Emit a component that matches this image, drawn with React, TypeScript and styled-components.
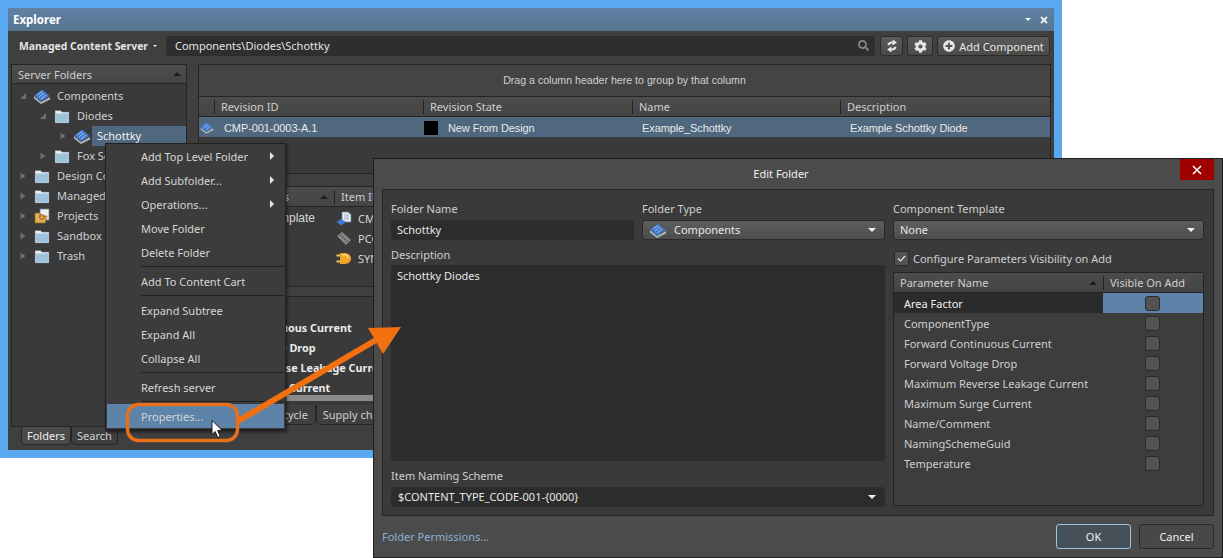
import styled, { createGlobalStyle } from "styled-components";
import { FaCog, FaPlusCircle, FaSearch } from "react-icons/fa";

const GlobalStyle = createGlobalStyle`
  html, body { margin: 0; padding: 0; background: #fff; }
  body { font-family: "Noto Sans", "Open Sans", sans-serif; font-size: 11px; letter-spacing: 0; color: #d8d8d8; }
  * { box-sizing: border-box; }
`;

const ComponentIcon = ({ size = 18 }: { size?: number }) => (
  <svg width={size} height={size} viewBox="0 0 18 18">
    <path d="M1 9 L8 15 L17 10 L17 12.5 L8 17 L1 11.5 Z" fill="#b0b8c0" />
    <path d="M1.5 8.5 L9 2.5 L16.5 9 L8 14.5 Z" fill="#4379cc" />
    <path d="M4 8 L9 4.5 M6 10 L11 6 M8 12 L13 8" stroke="#9cc0f0" strokeWidth="1" />
  </svg>
);

const FolderIcon = () => (
  <svg width={16} height={15} viewBox="0 0 16 15">
    <path d="M1 1.5 H6.5 L8 3 H15 V14 H1 Z" fill="#e8f0f6" stroke="#5c6a74" strokeWidth="0.6" />
    <rect x="1.6" y="4.5" width="12.8" height="9" fill="#9cc3da" />
  </svg>
);

const ProjectsIcon = () => (
  <svg width={17} height={17} viewBox="0 0 17 17">
    <rect x="6" y="1" width="9" height="11" fill="#eef0f2" stroke="#7b8288" strokeWidth="0.7" />
    <path d="M1 5 H6 V8 H13 L11 15 H1 Z" fill="#e0b050" stroke="#8a6a28" strokeWidth="0.7" />
    <circle cx="8" cy="9" r="2.4" fill="none" stroke="#b04a20" strokeWidth="1" />
  </svg>
);

const DocChipIcon = () => (
  <svg width={16} height={15} viewBox="0 0 16 15">
    <path d="M6 1 H12 L15 3.5 V11 H6 Z" fill="#e6ecf2" stroke="#6f8496" strokeWidth="0.7" />
    <path d="M8 4 H13 M8 6 H13 M8 8 H13" stroke="#8ea3b5" strokeWidth="0.8" />
    <path d="M0.5 11 L5 8 L10 11 L5 14.5 Z" fill="#3f78d0" />
  </svg>
);

const PadIcon = () => (
  <svg width={16} height={15} viewBox="0 0 16 15">
    <path d="M1 5 L6 1 L15 9 L10 14 Z" fill="#8a8a8a" />
    <path d="M4 5 L6 3.5 M6 7 L8 5.5 M8 9 L10 7.5 M10 11 L12 9.5" stroke="#555" strokeWidth="1.2" />
  </svg>
);

const PlugIcon = () => (
  <svg width={16} height={15} viewBox="0 0 16 15">
    <path d="M4 2 H9 C13 2 15 5 15 7.5 C15 10 13 13 9 13 H4 Z" fill="#f0a428" />
    <path d="M0.5 4.5 H4 M0.5 10.5 H4" stroke="#f6c868" strokeWidth="2" />
    <path d="M6 4 H9 C11 4 12 5.5 12 7" stroke="#ffe2a0" strokeWidth="1.2" fill="none" />
  </svg>
);

const SyncIcon = () => (
  <svg width={14} height={14} viewBox="0 0 14 14" fill="#e4e4e4">
    <path d="M2.5 6.2 C2.5 3.6 5 2.3 7.6 2.6 V0.6 L12 3.6 L7.6 6.4 V4.6 C6 4.4 5 5.2 4.8 6.2 Z" />
    <path d="M11.5 7.8 C11.5 10.4 9 11.7 6.4 11.4 V13.4 L2 10.4 L6.4 7.6 V9.4 C8 9.6 9 8.8 9.2 7.8 Z" />
  </svg>
);

const DropArrow = styled.span<{ $size?: number }>`
  width: 0;
  height: 0;
  border-left: ${(p) => p.$size ?? 5}px solid transparent;
  border-right: ${(p) => p.$size ?? 5}px solid transparent;
  border-top: ${(p) => p.$size ?? 5}px solid #f0f0f0;
`;

const SortArrow = styled.span`
  width: 0;
  height: 0;
  border-left: 4px solid transparent;
  border-right: 4px solid transparent;
  border-bottom: 4px solid #1e1e1e;
`;

const Canvas = styled.div`
  position: relative;
  width: 1223px;
  height: 558px;
  overflow: hidden;
  background: #fff;
`;

const ExplorerWindow = styled.div`
  position: absolute;
  left: 0;
  top: 0;
  width: 1062px;
  height: 458px;
  border: 8px solid #5aa8ef;
  background: #3f3f3f;
  display: flex;
  flex-direction: column;
`;

const TitleBar = styled.div`
  height: 23px;
  flex: none;
  display: flex;
  align-items: center;
  padding: 0 6px 0 5px;
  background: linear-gradient(#5f81a3, #567590);
  color: #fff;
  font-weight: 700;
  font-size: 11.5px;
`;

const TitleText = styled.span`
  flex: 1;
`;

const TitleButtons = styled.div`
  display: flex;
  align-items: center;
  gap: 9px;
`;

const Toolbar = styled.div`
  height: 33px;
  flex: none;
  display: flex;
  align-items: center;
  padding: 0 4px 3px 11px;
`;

const ServerPicker = styled.div`
  width: 147px;
  flex: none;
  display: flex;
  align-items: center;
  gap: 5px;
  color: #e4e4e4;
  font-weight: 700;
  font-size: 10.4px;
`;

const SearchBox = styled.div`
  width: 709px;
  height: 20px;
  flex: none;
  display: flex;
  align-items: center;
  justify-content: space-between;
  padding: 0 6px 2px 9px;
  border-radius: 3px;
  background: #2e2e2e;
  color: #e4e4e4;
`;

const ToolButton = styled.div<{ $width: number; $gap: number }>`
  width: ${(p) => p.$width}px;
  height: 20px;
  flex: none;
  margin-left: ${(p) => p.$gap}px;
  display: flex;
  align-items: center;
  justify-content: center;
  gap: 4px;
  border: 1px solid #2a2a2a;
  border-radius: 3px;
  background: linear-gradient(#5a5a5a, #4a4a4a);
  color: #e6e6e6;
  font-size: 11px;
`;

const Body = styled.div`
  flex: 1;
  display: flex;
  min-height: 0;
  padding-left: 3px;
`;

const LeftColumn = styled.div`
  width: 176px;
  flex: none;
  display: flex;
  flex-direction: column;
`;

const FoldersPanel = styled.div`
  height: 363px;
  flex: none;
  border: 1px solid #262626;
  background: #3a3a3a;
`;

const PanelHeader = styled.div`
  height: 19px;
  display: flex;
  align-items: center;
  justify-content: space-between;
  padding: 0 5px 0 6px;
  background: linear-gradient(#4e4e4e, #454545);
  border-bottom: 1px solid #262626;
  color: #cfcfcf;
`;

const TreeList = styled.div`
  padding-top: 2px;
`;

const TreeRow = styled.div<{ $level: number }>`
  height: 20px;
  display: flex;
  align-items: center;
  padding-left: ${(p) => 7 + p.$level * 20}px;
`;

const TreeArrow = styled.span`
  width: 14px;
  flex: none;
  display: flex;
`;

const TreeIconBox = styled.span`
  width: 18px;
  height: 18px;
  flex: none;
  display: flex;
  align-items: center;
  justify-content: center;
`;

const TreeLabel = styled.span<{ $selected?: boolean }>`
  flex: 1;
  margin-left: 1px;
  padding-left: 5px;
  line-height: 20px;
  color: ${(p) => (p.$selected ? "#f0f0f0" : "#cfcfcf")};
  background: ${(p) => (p.$selected ? "#50687f" : "transparent")};
`;

const TabStrip = styled.div<{ $indent: number }>`
  display: flex;
  padding-left: ${(p) => p.$indent}px;
`;

const Tab = styled.div<{ $active?: boolean; $width: number; $height?: number }>`
  width: ${(p) => p.$width}px;
  height: ${(p) => p.$height ?? 18}px;
  display: flex;
  align-items: center;
  justify-content: center;
  background: ${(p) => (p.$active ? "#4a4a4a" : "#3f3f3f")};
  border: 1px solid #262626;
  border-top: none;
  border-radius: 0 0 5px 5px;
  color: ${(p) => (p.$active ? "#eee" : "#cfcfcf")};
  white-space: nowrap;
`;

const RightColumn = styled.div`
  width: 853px;
  flex: none;
  margin-left: 11px;
  display: flex;
  flex-direction: column;
`;

const RevisionPane = styled.div`
  height: 110px;
  flex: none;
  border: 1px solid #262626;
  border-bottom-color: #222;
  background: #3a3a3a;
`;

const GroupBand = styled.div`
  height: 32px;
  display: flex;
  align-items: center;
  justify-content: center;
  padding-bottom: 2px;
  background: #444;
  border-bottom: 1px solid #262626;
  color: #d0d0d0;
  font-family: "Liberation Sans", Arial, sans-serif;
  font-size: 10.6px;
`;

const revisionColumns = "15px 209px 209px 208px 1fr";

const GridHeader = styled.div<{ $columns: string }>`
  height: 20px;
  display: grid;
  grid-template-columns: ${(p) => p.$columns};
  align-items: center;
  background: linear-gradient(#4c4c4c, #444);
  border-bottom: 1px solid #262626;
  color: #cfcfcf;
`;

const HeaderCell = styled.div`
  height: 14px;
  line-height: 14px;
  padding-left: 6px;
  border-left: 1px solid #222;
  white-space: nowrap;
`;

const HeaderBlank = styled.div``;

const RevisionRow = styled.div`
  height: 20px;
  display: grid;
  grid-template-columns: ${revisionColumns};
  align-items: center;
  padding-top: 1px;
  background: #50687f;
  color: #e8e8e8;
  font-family: "Liberation Sans", Arial, sans-serif;
  font-size: 11px;
  letter-spacing: -0.1px;
`;

const RowIcon = styled.div`
  display: flex;
  margin-left: 1px;
`;

const RowCell = styled.div`
  padding-left: 10px;
  white-space: nowrap;
`;

const StateCell = styled.div`
  display: flex;
  align-items: center;
  gap: 10px;
  padding-left: 1px;
`;

const Swatch = styled.span`
  width: 14px;
  height: 14px;
  background: #000;
`;

const LowerPane = styled.div`
  margin-top: 12px;
  height: 219px;
  flex: none;
  border-top: 1px solid #262626;
  display: flex;
  flex-direction: column;
  background: #3a3a3a;
`;

const lowerColumns = "136px 1fr";

const ItemRow = styled.div`
  height: 20px;
  display: grid;
  grid-template-columns: ${lowerColumns};
  align-items: center;
  color: #d8d8d8;
`;

const StatusCell = styled.div`
  text-align: right;
  padding-right: 19px;
  font-family: "Liberation Sans", Arial, sans-serif;
  font-size: 12px;
  white-space: nowrap;
`;

const TypesHeader = styled.div`
  display: flex;
  align-items: center;
  justify-content: flex-end;
  gap: 31px;
  padding-right: 6px;
`;

const ItemCell = styled.div`
  display: flex;
  align-items: center;
  gap: 6px;
  padding-left: 2px;
`;

const ItemList = styled.div`
  padding-top: 1px;
  height: 80px;
  border-bottom: 1px solid #262626;
`;

const ParamsHeaderGap = styled.div`
  height: 10px;
  background: #3f3f3f;
  border-bottom: 1px solid #262626;
`;

const ParamsList = styled.div`
  flex: 1;
  padding: 21px 0 0 0;
  color: #ececec;
  font-weight: 700;
  font-size: 10.8px;
  overflow: hidden;
`;

const ParamLine = styled.div`
  height: 20px;
  line-height: 20px;
  white-space: nowrap;
`;

const ScrollTrack = styled.div`
  height: 6px;
  flex: none;
  background: #8a8a8a;
  margin-bottom: 4px;
`;

const ContextMenu = styled.div`
  position: absolute;
  left: 105px;
  top: 143px;
  width: 181px;
  height: 287px;
  padding: 0 1px;
  background: #3c3c3c;
  border: 1px solid #222;
  box-shadow: 1px 2px 3px rgba(0, 0, 0, 0.55);
  z-index: 2;
`;

const MenuRow = styled.div<{ $hot?: boolean }>`
  height: 24px;
  display: flex;
  align-items: center;
  justify-content: space-between;
  padding: 0 10px 0 34px;
  background: ${(p) => (p.$hot ? "#5d83a8" : "transparent")};
  color: #d6d6d6;
`;

const MenuSeparator = styled.div`
  height: 5px;
  margin-left: 34px;
  padding-top: 2px;
  &::after {
    content: "";
    display: block;
    height: 1px;
    background: #1f1f1f;
  }
`;

const SubArrow = styled.span`
  width: 0;
  height: 0;
  border-top: 4px solid transparent;
  border-bottom: 4px solid transparent;
  border-left: 4px solid #e6e6e6;
`;

const Dialog = styled.div`
  position: absolute;
  left: 373px;
  top: 158px;
  width: 850px;
  height: 400px;
  border: 1px solid #1d1d1d;
  background: #4b4b4b;
  display: flex;
  flex-direction: column;
  z-index: 3;
`;

const DialogTitle = styled.div`
  height: 30px;
  flex: none;
  position: relative;
  display: flex;
  align-items: center;
  justify-content: center;
  color: #f0f0f0;
  padding: 0 34px 1px 0;
`;

const CloseButton = styled.div`
  position: absolute;
  right: 8px;
  top: 0;
  width: 34px;
  height: 21px;
  display: flex;
  align-items: center;
  justify-content: center;
  background: #a00000;
`;

const DialogPanel = styled.div`
  height: 327px;
  flex: none;
  margin: 0 8px;
  padding: 12px 8px 0;
  border: 1px solid #242424;
  background: #3a3a3a;
  display: flex;
  gap: 8px;
`;

const FormColumn = styled.div<{ $width: number }>`
  width: ${(p) => p.$width}px;
  flex: none;
  display: flex;
  flex-direction: column;
`;

const FieldRow = styled.div`
  display: flex;
  gap: 8px;
`;

const Field = styled.div`
  width: 243px;
  flex: none;
`;

const FieldLabel = styled.div<{ $top?: number; $bottom?: number }>`
  height: 14px;
  line-height: 14px;
  margin-top: ${(p) => p.$top ?? 0}px;
  margin-bottom: ${(p) => p.$bottom ?? 4}px;
  color: #cfcfcf;
`;

const TextInput = styled.div`
  height: 20px;
  display: flex;
  align-items: center;
  padding: 0 0 1px 6px;
  border-radius: 3px;
  background: #2c2c2c;
  color: #e6e6e6;
`;

const TextArea = styled.div`
  height: 196px;
  padding: 3px 6px;
  border-radius: 3px;
  background: #2c2c2c;
  color: #e6e6e6;
`;

const Select = styled.div<{ $flat?: boolean }>`
  height: 20px;
  display: flex;
  align-items: center;
  gap: 7px;
  padding: 0 8px 1px 6px;
  border-radius: 3px;
  border: 1px solid ${(p) => (p.$flat ? "#2c2c2c" : "#2a2a2a")};
  background: ${(p) => (p.$flat ? "#2c2c2c" : "linear-gradient(#5e5e5e, #4c4c4c)")};
  color: #e6e6e6;
`;

const SelectValue = styled.span`
  flex: 1;
`;

const CheckRow = styled.div`
  display: flex;
  align-items: center;
  gap: 4px;
  margin: 11px 0 6px 1px;
  height: 15px;
  color: #cfcfcf;
`;

const CheckBox = styled.span`
  width: 15px;
  height: 15px;
  flex: none;
  display: flex;
  align-items: center;
  justify-content: center;
  border: 1px solid #2a2a2a;
  border-radius: 3px;
  background: #535353;
`;

const ParamTable = styled.div`
  height: 234px;
  border: 1px solid #242424;
  border-radius: 2px;
  background: #3d3d3d;
`;

const paramColumns = "209px 1fr";

const ParamHeader = styled.div`
  height: 20px;
  display: grid;
  grid-template-columns: ${paramColumns};
  align-items: center;
  background: linear-gradient(#4c4c4c, #444);
  border-bottom: 1px solid #262626;
  color: #cfcfcf;
`;

const ParamHeaderName = styled.div`
  display: flex;
  align-items: center;
  justify-content: space-between;
  padding: 0 6px;
`;

const ParamRow = styled.div`
  height: 20px;
  display: grid;
  grid-template-columns: ${paramColumns};
`;

const ParamName = styled.div<{ $selected?: boolean }>`
  display: flex;
  align-items: center;
  padding-left: 10px;
  background: ${(p) => (p.$selected ? "#2b2b2b" : "transparent")};
  color: ${(p) => (p.$selected ? "#f0f0f0" : "#cfcfcf")};
`;

const ParamVisible = styled.div<{ $selected?: boolean }>`
  display: flex;
  align-items: center;
  justify-content: center;
  padding-right: 2px;
  background: ${(p) => (p.$selected ? "#5d83a8" : "transparent")};
`;

const DialogFooter = styled.div`
  flex: 1;
  display: flex;
  align-items: center;
  padding: 0 8px;
  gap: 8px;
`;

const PermissionsLink = styled.span`
  flex: 1;
  color: #8db0d2;
`;

const DialogButton = styled.div<{ $primary?: boolean }>`
  width: 75px;
  height: 25px;
  display: flex;
  align-items: center;
  justify-content: center;
  border: 1px solid ${(p) => (p.$primary ? "#9fc4e2" : "#2a2a2a")};
  border-radius: 3px;
  background: ${(p) => (p.$primary ? "#465058" : "#484848")};
  color: #f0f0f0;
`;

const Overlay = styled.svg`
  position: absolute;
  left: 0;
  top: 0;
  z-index: 4;
  pointer-events: none;
`;

type TreeItem = {
  label: string;
  level: number;
  icon: "component" | "folder" | "projects";
  open?: boolean;
  selected?: boolean;
};

const treeItems: TreeItem[] = [
  { label: "Components", level: 0, icon: "component", open: true },
  { label: "Diodes", level: 1, icon: "folder", open: true },
  { label: "Schottky", level: 2, icon: "component", selected: true },
  { label: "Fox Semi", level: 1, icon: "folder" },
  { label: "Design Content", level: 0, icon: "folder" },
  { label: "Managed", level: 0, icon: "folder" },
  { label: "Projects", level: 0, icon: "projects" },
  { label: "Sandbox", level: 0, icon: "folder" },
  { label: "Trash", level: 0, icon: "folder" },
];

const treeIcons = {
  component: <ComponentIcon />,
  folder: <FolderIcon />,
  projects: <ProjectsIcon />,
};

const TreeToggle = ({ open }: { open?: boolean }) => (
  <svg width={8} height={8} viewBox="0 0 8 8">
    {open ? <path d="M7 1 V7 H1 Z" fill="#6f6f6f" /> : <path d="M1.5 0.5 L6.5 4 L1.5 7.5 Z" fill="#6f6f6f" />}
  </svg>
);

type MenuEntry = { label?: string; sub?: boolean; hot?: boolean };

const menuEntries: MenuEntry[] = [
  { label: "Add Top Level Folder", sub: true },
  { label: "Add Subfolder...", sub: true },
  { label: "Operations...", sub: true },
  { label: "Move Folder" },
  { label: "Delete Folder" },
  {},
  { label: "Add To Content Cart" },
  {},
  { label: "Expand Subtree" },
  { label: "Expand All" },
  { label: "Collapse All" },
  {},
  { label: "Refresh server" },
  {},
  { label: "Properties...", hot: true },
];

const parameters = [
  "Area Factor",
  "ComponentType",
  "Forward Continuous Current",
  "Forward Voltage Drop",
  "Maximum Reverse Leakage Current",
  "Maximum Surge Current",
  "Name/Comment",
  "NamingSchemeGuid",
  "Temperature",
];

const items = [
  { status: "Component Template", code: "CMP", icon: <DocChipIcon /> },
  { status: "", code: "PCC", icon: <PadIcon /> },
  { status: "", code: "SYM", icon: <PlugIcon /> },
];

const Explorer = () => (
  <ExplorerWindow>
    <TitleBar>
      <TitleText>Explorer</TitleText>
      <TitleButtons>
        <DropArrow $size={3} />
        <svg width={8} height={8} viewBox="0 0 8 8">
          <path d="M1 1 L7 7 M7 1 L1 7" stroke="#f0f0f0" strokeWidth="1.8" />
        </svg>
      </TitleButtons>
    </TitleBar>
    <Toolbar>
      <ServerPicker>
        Managed Content Server
        <DropArrow $size={2} />
      </ServerPicker>
      <SearchBox>
        Components\Diodes\Schottky
        <FaSearch size={11} color="#8a8a8a" />
      </SearchBox>
      <ToolButton $width={23} $gap={5}>
        <SyncIcon />
      </ToolButton>
      <ToolButton $width={26} $gap={4}>
        <FaCog size={13} />
      </ToolButton>
      <ToolButton $width={113} $gap={4}>
        <FaPlusCircle size={12} />
        Add Component
      </ToolButton>
    </Toolbar>
    <Body>
      <LeftColumn>
        <FoldersPanel>
          <PanelHeader>
            Server Folders
            <SortArrow />
          </PanelHeader>
          <TreeList>
            {treeItems.map((t) => (
              <TreeRow key={t.label} $level={t.level}>
                <TreeArrow>
                  <TreeToggle open={t.open} />
                </TreeArrow>
                <TreeIconBox>{treeIcons[t.icon]}</TreeIconBox>
                <TreeLabel $selected={t.selected}>{t.label}</TreeLabel>
              </TreeRow>
            ))}
          </TreeList>
        </FoldersPanel>
        <TabStrip $indent={10}>
          <Tab $active $width={50}>Folders</Tab>
          <Tab $width={47}>Search</Tab>
        </TabStrip>
      </LeftColumn>
      <RightColumn>
        <RevisionPane>
          <GroupBand>Drag a column header here to group by that column</GroupBand>
          <GridHeader $columns={revisionColumns}>
            <HeaderBlank />
            <HeaderCell>Revision ID</HeaderCell>
            <HeaderCell>Revision State</HeaderCell>
            <HeaderCell>Name</HeaderCell>
            <HeaderCell>Description</HeaderCell>
          </GridHeader>
          <RevisionRow>
            <RowIcon>
              <ComponentIcon size={15} />
            </RowIcon>
            <RowCell>CMP-001-0003-A.1</RowCell>
            <StateCell>
              <Swatch />
              New From Design
            </StateCell>
            <RowCell>Example_Schottky</RowCell>
            <RowCell>Example Schottky Diode</RowCell>
          </RevisionRow>
        </RevisionPane>
        <LowerPane>
          <GridHeader $columns={lowerColumns}>
            <TypesHeader>
              Types
              <SortArrow />
            </TypesHeader>
            <HeaderCell>Item ID</HeaderCell>
          </GridHeader>
          <ItemList>
            {items.map((it) => (
              <ItemRow key={it.code}>
                <StatusCell>{it.status}</StatusCell>
                <ItemCell>
                  {it.icon}
                  {it.code}
                </ItemCell>
              </ItemRow>
            ))}
          </ItemList>
          <ParamsHeaderGap />
          <ParamsList>
            <ParamLine>Forward Continuous Current</ParamLine>
            <ParamLine>Forward Voltage Drop</ParamLine>
            <ParamLine>Maximum Reverse Leakage Current</ParamLine>
            <ParamLine>Maximum Surge Current</ParamLine>
          </ParamsList>
          <ScrollTrack />
        </LowerPane>
        <TabStrip $indent={58}>
          <Tab $width={60} $height={20}>Lifecycle</Tab>
          <Tab $width={79} $height={20}>Supply chain</Tab>
        </TabStrip>
      </RightColumn>
    </Body>
  </ExplorerWindow>
);

const FolderMenu = () => (
  <ContextMenu>
    {menuEntries.map((m, i) =>
      m.label ? (
        <MenuRow key={m.label} $hot={m.hot}>
          {m.label}
          {m.sub && <SubArrow />}
        </MenuRow>
      ) : (
        <MenuSeparator key={i} />
      )
    )}
  </ContextMenu>
);

const EditFolder = () => (
  <Dialog>
    <DialogTitle>
      Edit Folder
      <CloseButton>
        <svg width={10} height={10} viewBox="0 0 10 10">
          <path d="M1 1 L9 9 M9 1 L1 9" stroke="#fff" strokeWidth="1.6" />
        </svg>
      </CloseButton>
    </DialogTitle>
    <DialogPanel>
      <FormColumn $width={494}>
        <FieldRow>
          <Field>
            <FieldLabel>Folder Name</FieldLabel>
            <TextInput>Schottky</TextInput>
          </Field>
          <Field>
            <FieldLabel>Folder Type</FieldLabel>
            <Select>
              <ComponentIcon />
              <SelectValue>Components</SelectValue>
              <DropArrow $size={4} />
            </Select>
          </Field>
        </FieldRow>
        <FieldLabel $top={8} $bottom={3}>Description</FieldLabel>
        <TextArea>Schottky Diodes</TextArea>
        <FieldLabel $top={8}>Item Naming Scheme</FieldLabel>
        <Select $flat>
          <SelectValue>$CONTENT_TYPE_CODE-001-{"{0000}"}</SelectValue>
          <DropArrow $size={4} />
        </Select>
      </FormColumn>
      <FormColumn $width={311}>
        <FieldLabel>Component Template</FieldLabel>
        <Select>
          <SelectValue>None</SelectValue>
          <DropArrow $size={4} />
        </Select>
        <CheckRow>
          <CheckBox>
            <svg width={9} height={9} viewBox="0 0 9 9">
              <path d="M1 4.5 L3.5 7 L8 2" stroke="#e6e6e6" strokeWidth="1.2" fill="none" />
            </svg>
          </CheckBox>
          Configure Parameters Visibility on Add
        </CheckRow>
        <ParamTable>
          <ParamHeader>
            <ParamHeaderName>
              Parameter Name
              <SortArrow />
            </ParamHeaderName>
            <HeaderCell>Visible On Add</HeaderCell>
          </ParamHeader>
          {parameters.map((name, i) => (
            <ParamRow key={name}>
              <ParamName $selected={i === 0}>{name}</ParamName>
              <ParamVisible $selected={i === 0}>
                <CheckBox />
              </ParamVisible>
            </ParamRow>
          ))}
        </ParamTable>
      </FormColumn>
    </DialogPanel>
    <DialogFooter>
      <PermissionsLink>Folder Permissions...</PermissionsLink>
      <DialogButton $primary>OK</DialogButton>
      <DialogButton>Cancel</DialogButton>
    </DialogFooter>
  </Dialog>
);

const Callout = () => (
  <Overlay width={1223} height={558} viewBox="0 0 1223 558">
    <rect x="127.5" y="404.5" width="110" height="36" rx="11" fill="none" stroke="#e8701a" strokeWidth="3.5" />
    <path d="M238 421 L376 340" stroke="#f2700f" strokeWidth="6" />
    <path d="M368 328 L401 327 L383 354 Z" fill="#f2700f" />
    <path d="M212 420.5 V434.5 L215.2 431.5 L217.8 437.5 L220.2 436.4 L217.6 430.5 L222 430.2 Z" fill="#fff" stroke="#111" strokeWidth="0.9" />
  </Overlay>
);

export default function App() {
  return (
    <>
      <GlobalStyle />
      <Canvas>
        <Explorer />
        <FolderMenu />
        <EditFolder />
        <Callout />
      </Canvas>
    </>
  );
}
